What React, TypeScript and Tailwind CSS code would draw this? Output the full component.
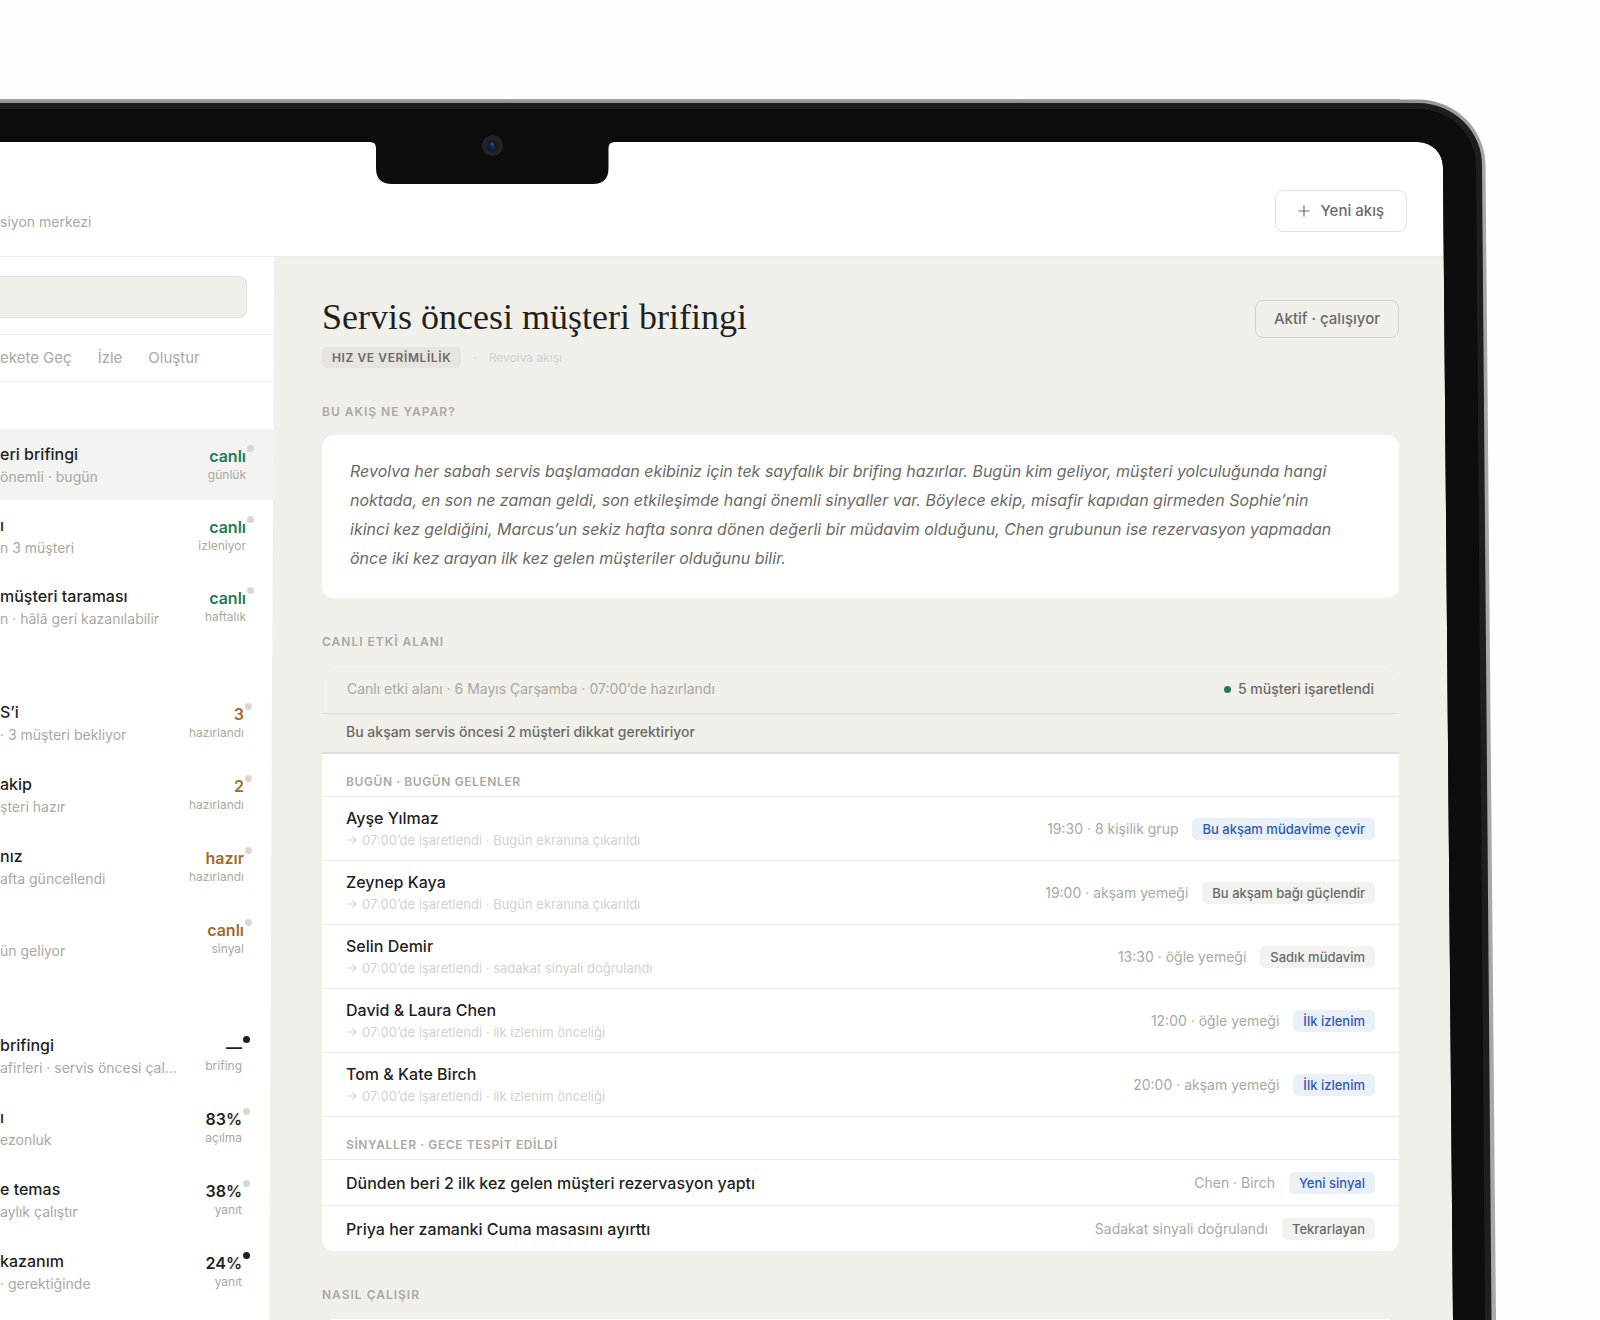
import { clsx } from 'clsx'

type Tone = 'green' | 'amber' | 'ink'

interface Flow {
  name: string
  detail: string
  value: string
  unit: string
  tone: Tone
  alert?: boolean
}

interface Guest {
  name: string
  note?: string
  meta: string
  tag: string
  blue?: boolean
}

const groups: { row: string; flows: Flow[] }[] = [
  {
    row: 'h-[71px] pr-7',
    flows: [
      { name: 'eri brifingi', detail: 'önemli · bugün', value: 'canlı', unit: 'günlük', tone: 'green' },
      { name: 'ı', detail: 'n 3 müşteri', value: 'canlı', unit: 'izleniyor', tone: 'green' },
      { name: 'müşteri taraması', detail: 'n · hâlâ geri kazanılabilir', value: 'canlı', unit: 'haftalık', tone: 'green' },
    ],
  },
  {
    row: 'h-[72px] pr-[30px]',
    flows: [
      { name: 'S’i', detail: '· 3 müşteri bekliyor', value: '3', unit: 'hazırlandı', tone: 'amber' },
      { name: 'akip', detail: 'şteri hazır', value: '2', unit: 'hazırlandı', tone: 'amber' },
      { name: 'nız', detail: 'afta güncellendi', value: 'hazır', unit: 'hazırlandı', tone: 'amber' },
      { name: '', detail: 'ün geliyor', value: 'canlı', unit: 'sinyal', tone: 'amber' },
    ],
  },
  {
    row: 'h-[72px] pr-8',
    flows: [
      { name: 'brifingi', detail: 'afirleri · servis öncesi çal…', value: '—', unit: 'brifing', tone: 'ink', alert: true },
      { name: 'ı', detail: 'ezonluk', value: '83%', unit: 'açılma', tone: 'ink' },
      { name: 'e temas', detail: 'aylık çalıştır', value: '38%', unit: 'yanıt', tone: 'ink' },
      { name: 'kazanım', detail: '· gerektiğinde', value: '24%', unit: 'yanıt', tone: 'ink', alert: true },
    ],
  },
]

const guests: Guest[] = [
  { name: 'Ayşe Yılmaz', note: '07:00’de işaretlendi · Bugün ekranına çıkarıldı', meta: '19:30 · 8 kişilik grup', tag: 'Bu akşam müdavime çevir', blue: true },
  { name: 'Zeynep Kaya', note: '07:00’de işaretlendi · Bugün ekranına çıkarıldı', meta: '19:00 · akşam yemeği', tag: 'Bu akşam bağı güçlendir' },
  { name: 'Selin Demir', note: '07:00’de işaretlendi · sadakat sinyali doğrulandı', meta: '13:30 · öğle yemeği', tag: 'Sadık müdavim' },
  { name: 'David & Laura Chen', note: '07:00’de işaretlendi · ilk izlenim önceliği', meta: '12:00 · öğle yemeği', tag: 'İlk izlenim', blue: true },
  { name: 'Tom & Kate Birch', note: '07:00’de işaretlendi · ilk izlenim önceliği', meta: '20:00 · akşam yemeği', tag: 'İlk izlenim', blue: true },
]

const signals: Guest[] = [
  { name: 'Dünden beri 2 ilk kez gelen müşteri rezervasyon yaptı', meta: 'Chen · Birch', tag: 'Yeni sinyal', blue: true },
  { name: 'Priya her zamanki Cuma masasını ayırttı', meta: 'Sadakat sinyali doğrulandı', tag: 'Tekrarlayan' },
]

const tones: Record<Tone, string> = {
  green: 'text-[#237a55]',
  amber: 'text-[#a26a2b]',
  ink: 'text-[#1f1f1e]',
}

const sectionCls = 'text-xs leading-4 font-semibold tracking-[1px] text-[#a9a8a2]'
const listHeadCls = 'px-6 pt-5 pb-1.5 text-xs leading-4 font-semibold tracking-wider text-[#a9a8a2]'

function FlowRow({ flow, row, selected }: { flow: Flow; row: string; selected: boolean }) {
  return (
    <button
      type="button"
      className={clsx('flex w-full items-center justify-between text-left', row, selected && 'bg-[#f3f3f1]')}
    >
      <span className="flex flex-col">
        <span className="h-6 whitespace-nowrap text-base leading-6 font-medium text-[#1f1f1e]">{flow.name}</span>
        <span className="whitespace-nowrap text-sm leading-[22px] text-[#a9a8a2]">{flow.detail}</span>
      </span>
      <span className="relative flex flex-col items-end">
        <span className={clsx('text-base leading-5 font-semibold', tones[flow.tone])}>{flow.value}</span>
        <span className="text-xs leading-[18px] text-[#a9a8a2]">{flow.unit}</span>
        <span className={clsx('absolute -top-px -right-2 size-[7px] rounded-full', flow.alert ? 'bg-[#1f1f1e]' : 'bg-[#d8d7d1]')} />
      </span>
    </button>
  )
}

function GuestRow({ guest }: { guest: Guest }) {
  return (
    <li className={clsx('flex items-center justify-between border-t border-[#ebebe9] px-6', guest.note ? 'h-16' : 'h-[46px]')}>
      <div className="flex flex-col">
        <span className="text-base leading-[22px] font-medium text-[#1f1f1e]">{guest.name}</span>
        {guest.note && (
          <span className="flex items-center gap-1 text-[13px] leading-[22px] text-[#d3d2cc]">
            <svg viewBox="0 0 12 12" className="size-3" fill="none" stroke="currentColor" strokeWidth="1.2">
              <path d="M1 6h9M6.5 2.5 10 6l-3.5 3.5" />
            </svg>
            {guest.note}
          </span>
        )}
      </div>
      <div className="flex items-center gap-3.5">
        <span className="text-sm text-[#a9a8a2]">{guest.meta}</span>
        <span
          className={clsx(
            'rounded-[5px] px-2.5 text-[13px] leading-[22px] font-medium',
            guest.blue ? 'bg-[#e9f0f8] text-[#2f5bb0]' : 'bg-[#f2f2f0] text-[#6b6a65]',
          )}
        >
          {guest.tag}
        </span>
      </div>
    </li>
  )
}

/* right side of the lid: its edge leans outwards towards the bottom */
function LidEdge() {
  return (
    <svg
      aria-hidden="true"
      viewBox="1400 99 200 1221"
      className="pointer-events-none absolute top-0 right-0 h-[1221px] w-[200px]"
    >
      <defs>
        <linearGradient id="rim" x1="0" x2="1" y1="0" y2="0">
          <stop offset="0" stopColor="#8d8f8d" />
          <stop offset="1" stopColor="#a9a9ab" />
        </linearGradient>
      </defs>
      <path d="M1400 99h200v1221h-200z M1400 142H1418A25 25 0 0 1 1443 167L1453 1320H1400z" fill="#fefefe" fillRule="evenodd" />
      <path d="M1400 99.500H1418A68 66 0 0 1 1485.500 165L1496 1320H1453L1443 167A25 25 0 0 0 1418 142H1400z" fill="url(#rim)" />
      <path d="M1400 103H1418A64 62 0 0 1 1482 165L1491.500 1320H1453L1443 167A25 25 0 0 0 1418 142H1400z" fill="#1e1e1e" />
      <path d="M1400 109H1418A58 57 0 0 1 1476 166L1485 1320H1453L1443 167A25 25 0 0 0 1418 142H1400z" fill="#0d0d0d" />
    </svg>
  )
}

function Notch() {
  return (
    <svg aria-hidden="true" viewBox="370 99 245 86" className="pointer-events-none absolute top-0 left-[370px] h-[86px] w-[245px]">
      <defs>
        <radialGradient id="lens">
          <stop offset="0" stopColor="#1c3566" />
          <stop offset="0.500" stopColor="#12203c" />
          <stop offset="1" stopColor="#15181f" />
        </radialGradient>
      </defs>
      <path d="M370 140V142Q376 142 376 148V168Q376 184 392 184H593Q608.500 184 608.500 168V148Q608.500 142 615 142V140z" fill="#0d0d0d" />
      <circle cx="492.500" cy="145.500" r="10.500" fill="#242424" />
      <circle cx="492.500" cy="146" r="6" fill="url(#lens)" />
      <circle cx="492" cy="144" r="1.500" fill="#2d4f8d" />
    </svg>
  )
}

export default function App() {
  return (
    <div className="h-screen overflow-hidden bg-[#fefefe] pt-[99px] font-['Inter','Liberation_Sans',sans-serif]">
      <div className="relative">
        <div className="mr-[200px] h-[43px] bg-[linear-gradient(#a4a6a4_0,#8d8f8d_4px,#1e1e1e_4px,#1e1e1e_10px,#0d0d0d_10px)]" />

        <div className="mr-[140px] flex flex-col">
          <header className="flex h-[115px] items-center justify-between border-b border-[#ededeb] bg-white pt-6 pr-[53px]">
            <p className="self-end pb-6 text-sm leading-5 text-[#a9a8a2]">siyon merkezi</p>
            <button
              type="button"
              className="flex h-[42px] items-center gap-2.5 rounded-lg border border-[#e2e2df] bg-white px-[22px] text-[15px] font-medium text-[#6b6a65]"
            >
              <svg viewBox="0 0 12 12" className="size-3" fill="none" stroke="currentColor" strokeWidth="1.200">
                <path d="M6 .5v11M.5 6h11" />
              </svg>
              Yeni akış
            </button>
          </header>

          <div className="flex h-[1080px] bg-[#f0efea]">
            <aside className="w-[274px] shrink-0 bg-white [clip-path:polygon(0_0,274px_0,269px_100%,0_100%)]">
              <div className="h-[78px] border-b border-[#ededeb] pt-[19px] pr-[27px]">
                <input
                  type="search"
                  aria-label="Ara"
                  className="block h-[42px] w-full rounded-r-lg border border-l-0 border-[#e2e1dc] bg-[#f0efea] px-3 text-sm outline-none"
                />
              </div>
              <nav className="flex h-[47px] items-center gap-[26px] border-b border-[#ededeb] text-[15px] text-[#a9a8a2]">
                <button type="button">ekete Geç</button>
                <button type="button">İzle</button>
                <button type="button">Oluştur</button>
              </nav>
              <div className="flex flex-col gap-[45px] pt-[47px]">
                {groups.map((group, g) => (
                  <div key={g}>
                    {group.flows.map((flow, i) => (
                      <FlowRow key={i} flow={flow} row={group.row} selected={g === 0 && i === 0} />
                    ))}
                  </div>
                ))}
              </div>
            </aside>

            <main className="min-w-0 flex-1 pt-9 pr-[61px] pl-12">
              <div className="flex items-start justify-between">
                <div>
                  <h1 className="pt-0.5 font-['Liberation_Serif',serif] text-4xl leading-[44px] text-[#1f1f1e]">
                    Servis öncesi müşteri brifingi
                  </h1>
                  <div className="mt-2 flex items-center gap-3 text-xs leading-[21px]">
                    <span className="rounded-[5px] bg-[#e5e4df] px-2.5 font-semibold tracking-wider text-[#6b6a65]">HIZ VE VERİMLİLİK</span>
                    <span className="text-[#d3d2cc]">·</span>
                    <span className="text-[#d3d2cc]">Revolva akışı</span>
                  </div>
                </div>
                <button
                  type="button"
                  className="mt-[7px] h-[38px] rounded-lg border border-[#d3d2cd] px-[18px] text-[15px] font-medium text-[#6b6a65]"
                >
                  Aktif · çalışıyor
                </button>
              </div>

              <h2 className={clsx(sectionCls, 'mt-9')}>BU AKIŞ NE YAPAR?</h2>
              <p className="mt-[15px] rounded-xl bg-white px-7 pt-[22px] pb-[25px] text-base leading-[29px] text-[#6b6a65] italic">
                Revolva her sabah servis başlamadan ekibiniz için tek sayfalık bir brifing hazırlar. Bugün kim geliyor, müşteri yolculuğunda hangi
                <br />
                noktada, en son ne zaman geldi, son etkileşimde hangi önemli sinyaller var. Böylece ekip, misafir kapıdan girmeden Sophie’nin
                <br />
                ikinci kez geldiğini, Marcus’un sekiz hafta sonra dönen değerli bir müdavim olduğunu, Chen grubunun ise rezervasyon yapmadan
                <br />
                önce iki kez arayan ilk kez gelen müşteriler olduğunu bilir.
              </p>

              <h2 className={clsx(sectionCls, 'mt-9')}>CANLI ETKİ ALANI</h2>
              <section className="mt-3.5 overflow-hidden rounded-xl bg-white">
                <div className="flex h-[50px] items-center justify-between rounded-t-xl border border-[#edece8] border-b-[#dfdeda] bg-[#f0efea] px-6 text-sm">
                  <span className="text-[#a9a8a2]">Canlı etki alanı · 6 Mayıs Çarşamba · 07:00’de hazırlandı</span>
                  <span className="flex items-center gap-[7px] font-medium text-[#6b6a65]">
                    <span className="size-[7px] rounded-full bg-[#237a55]" />
                    5 müşteri işaretlendi
                  </span>
                </div>
                <p className="h-10 border-b-2 border-[#dfdeda] bg-[#f0efea] px-6 text-sm leading-9 font-medium text-[#6b6a65]">
                  Bu akşam servis öncesi 2 müşteri dikkat gerektiriyor
                </p>
                <h3 className={listHeadCls}>BUGÜN · BUGÜN GELENLER</h3>
                <ul>
                  {guests.map(guest => (
                    <GuestRow key={guest.name} guest={guest} />
                  ))}
                </ul>
                <h3 className={clsx(listHeadCls, 'border-t border-[#ebebe9]')}>SİNYALLER · GECE TESPİT EDİLDİ</h3>
                <ul>
                  {signals.map(guest => (
                    <GuestRow key={guest.name} guest={guest} />
                  ))}
                </ul>
              </section>

              <h2 className={clsx(sectionCls, 'mt-9')}>NASIL ÇALIŞIR</h2>
              <div className="mt-4 h-20 rounded-xl bg-white" />
            </main>
          </div>
        </div>

        <Notch />
        <LidEdge />
      </div>
    </div>
  )
}
